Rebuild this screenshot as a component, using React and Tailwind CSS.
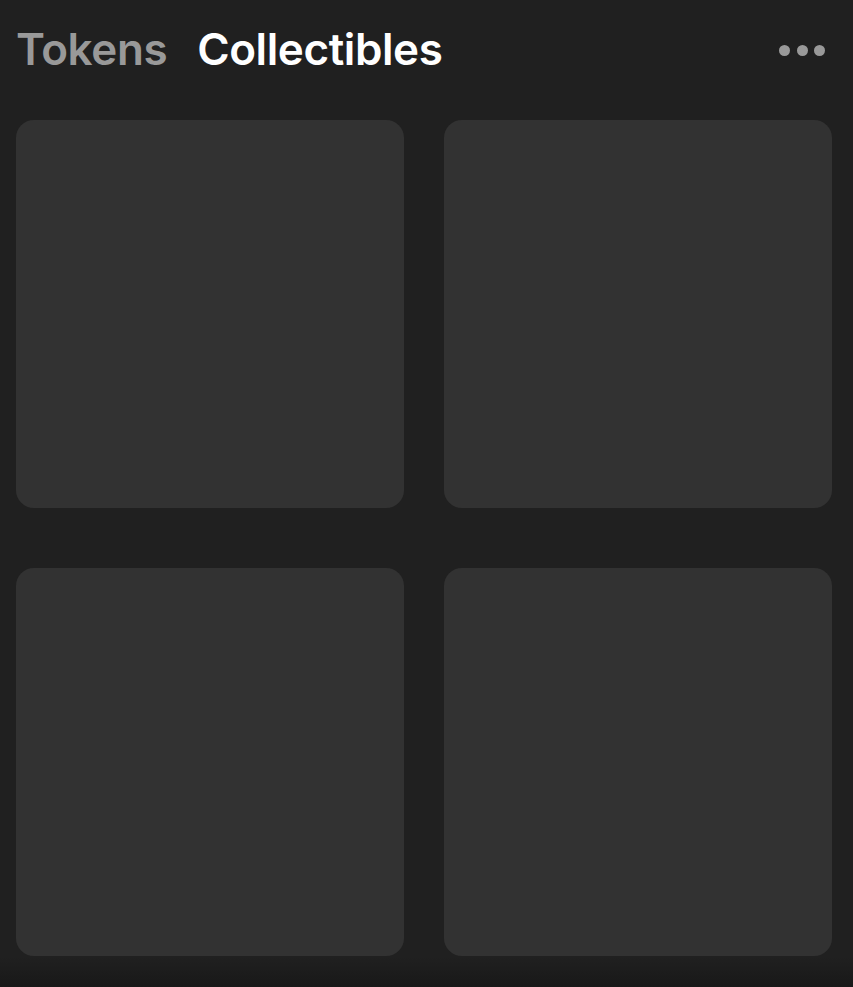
import React from 'react';

const Card = () => <div className="h-[388px] w-[388px] rounded-[18px] bg-[#323232]" />;

export default function App() {
  return (
    <div className="relative h-[987px] w-full overflow-hidden bg-[#202020] font-['Inter',sans-serif]">
      {/* Tabs */}
      <div className="flex h-[100px] items-start justify-between px-4 pt-[19px]">
        <div className="flex items-baseline gap-[30px] text-[44px] font-semibold leading-[60px] tracking-[-0.4px]">
          <span className="text-[#999999]">Tokens</span>
          <span className="text-white">Collectibles</span>
        </div>
        <div className="mt-[26px] mr-[12px] flex gap-[6.5px]">
          <span className="h-[11px] w-[11px] rounded-full bg-[#999999]" />
          <span className="h-[11px] w-[11px] rounded-full bg-[#999999]" />
          <span className="h-[11px] w-[11px] rounded-full bg-[#999999]" />
        </div>
      </div>

      {/* Collectibles grid */}
      <div className="mt-5 grid grid-cols-[388px_388px] gap-x-10 gap-y-[60px] px-4">
        <Card />
        <Card />
        <Card />
        <Card />
      </div>

      {/* bottom fade */}
      <div className="pointer-events-none absolute bottom-0 left-0 h-[30px] w-full bg-gradient-to-b from-transparent to-[#181818]" />
    </div>
  );
}
